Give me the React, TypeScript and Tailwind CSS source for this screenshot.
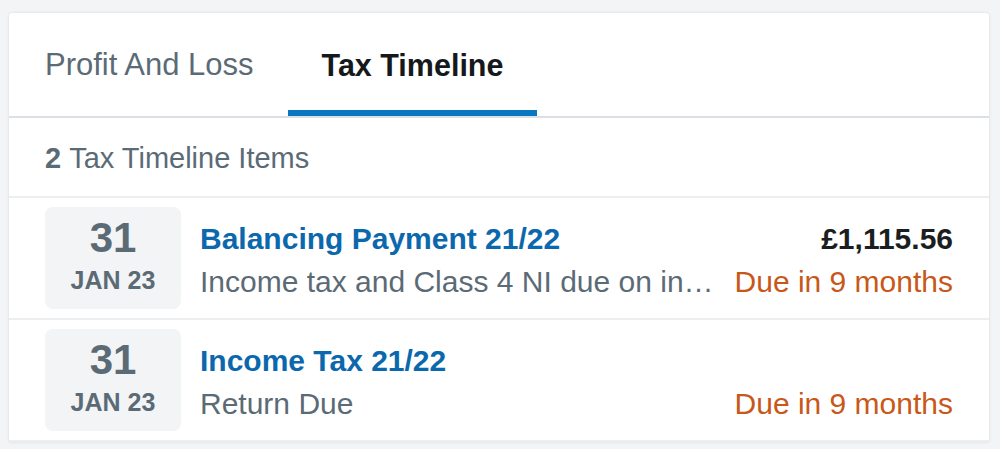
import React from "react";

type Item = {
	day: string;
	month: string;
	title: string;
	description: string;
	amount?: string;
	due: string;
};

const items: Item[] = [
	{
		day: "31",
		month: "JAN 23",
		title: "Balancing Payment 21/22",
		description: "Income tax and Class 4 NI due on income from 2021/22",
		amount: "£1,115.56",
		due: "Due in 9 months",
	},
	{
		day: "31",
		month: "JAN 23",
		title: "Income Tax 21/22",
		description: "Return Due",
		due: "Due in 9 months",
	},
];

const TimelineRow = ({ item }: { item: Item }) => {
	return (
		<div className="flex items-center gap-[19px] px-[36px] py-[9px] border-b-2 border-[#eceef0]">
			<div className="w-[136px] h-[102px] shrink-0 rounded-[8px] bg-[#f3f4f6] flex flex-col items-center justify-center text-[#5b6b76] font-bold pb-[5px]">
				<div className="text-[42px] leading-[42px]">{item.day}</div>
				<div className="text-[25px] leading-[28px] mt-[7px]">{item.month}</div>
			</div>
			<div className="flex-1 min-w-0 flex flex-col gap-[9px] mt-[4px]">
				<div className="flex items-baseline justify-between gap-4">
					<span className="text-[#0b68ad] font-bold text-[30px] leading-[34px] truncate">
						{item.title}
					</span>
					{item.amount && (
						<span className="text-[#1b1e20] font-bold text-[30px] leading-[34px] shrink-0">
							{item.amount}
						</span>
					)}
				</div>
				<div className="flex items-baseline justify-between gap-[14px]">
					<span className="text-[#5b6b76] text-[30px] leading-[34px] truncate">
						{item.description}
					</span>
					<span className="text-[#c8581a] text-[30px] leading-[34px] shrink-0">
						{item.due}
					</span>
				</div>
			</div>
		</div>
	);
};

export default function App() {
	return (
		<div
			className="h-screen overflow-hidden bg-[#f3f4f6] pt-[13px] pl-[9px] pr-[11px]"
			style={{ fontFamily: '"Liberation Sans", Arial, sans-serif' }}
		>
			<div className="bg-white rounded-t-[3px] shadow-[0_0_3px_rgba(0,0,0,0.12)]">
				<div className="flex pl-[2px] border-b-2 border-[#dcdfe3] h-[105px]">
					<button className="px-[34px] text-[31px] text-[#5b6b76] border-b-[6px] border-transparent pt-[8px]">
						Profit And Loss
					</button>
					<button className="px-[34px] text-[30.5px] font-bold text-[#16191b] border-b-[6px] border-[#0a76c0] pt-[8px]">
						Tax Timeline
					</button>
				</div>
				<div className="h-[80px] flex items-center px-[36px] pt-[4px] border-b-2 border-[#eceef0] text-[29px] text-[#5b6b76]">
					<span className="font-bold mr-[8px]">2</span>
					<span>Tax Timeline Items</span>
				</div>
				{items.map((item, i) => (
					<TimelineRow key={i} item={item} />
				))}
			</div>
		</div>
	);
}
